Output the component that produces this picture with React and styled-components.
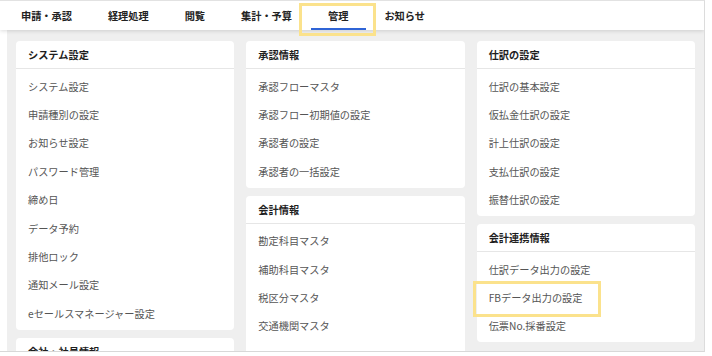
import styled, { createGlobalStyle } from "styled-components";

const GlobalStyle = createGlobalStyle`
  * {
    box-sizing: border-box;
  }

  body {
    margin: 0;
    background: #ffffff;
    font-family: "Noto Sans CJK JP", "Noto Sans", sans-serif;
    color: #222;
  }
`;

const Frame = styled.div`
  width: 705px;
  height: 352px;
  border-top: 1px solid #e2e2e2;
  border-right: 1px solid #dcdcdc;
  border-bottom: 1px solid #d8d8d8;
  overflow: hidden;
  display: flex;
  flex-direction: column;
`;

const NavBar = styled.nav`
  height: 29px;
  flex-shrink: 0;
  display: flex;
  padding-left: 3px;
  background: #fff;
  box-shadow: 0 1px 4px rgba(0, 0, 0, 0.14);
  position: relative;
  z-index: 2;
`;

const Tab = styled.div`
  position: relative;
  padding: 0 18px;
  display: flex;
  align-items: center;
  font-size: 10.2px;
  font-weight: 700;
  color: #222;
  white-space: nowrap;

  ${({ $active }) =>
    $active &&
    `
    &::after {
      content: "";
      position: absolute;
      left: 1px;
      right: 0;
      bottom: 0;
      height: 2px;
      background: #2f64d6;
    }
  `}
`;

const Highlight = styled.span`
  position: absolute;
  border: 3px solid #fbe28c;
  pointer-events: none;
`;

const Content = styled.main`
  flex: 1;
  margin-left: 7px;
  padding: 11px 9px;
  background: #efefef;
  display: grid;
  grid-template-columns: repeat(3, 1fr);
  gap: 12px;
  align-items: start;
`;

const Column = styled.div`
  display: flex;
  flex-direction: column;
  gap: 8px;
`;

const Card = styled.section`
  background: #fff;
  border-radius: 4px;
  padding-bottom: ${({ $clipped }) => ($clipped ? "24px" : "2px")};
`;

const CardHeader = styled.h3`
  margin: 0;
  height: 28px;
  padding: 0 12px;
  display: flex;
  align-items: center;
  font-size: 10.2px;
  font-weight: 700;
  color: #1e1e1e;
  border-bottom: 1px solid #e6e6e6;
`;

const ItemList = styled.ul`
  list-style: none;
  margin: 0;
  padding: 3px 0 0;
`;

const Item = styled.li`
  position: relative;
  height: 28.4px;
  padding: 0 12px;
  display: flex;
  align-items: center;
  font-size: 10.2px;
  color: #555;
  white-space: nowrap;
`;

const columns = [
  [
    {
      title: "システム設定",
      items: [
        "システム設定",
        "申請種別の設定",
        "お知らせ設定",
        "パスワード管理",
        "締め日",
        "データ予約",
        "排他ロック",
        "通知メール設定",
        "eセールスマネージャー設定",
      ],
    },
    { title: "会社・社員情報", items: [], clipped: true },
  ],
  [
    {
      title: "承認情報",
      items: ["承認フローマスタ", "承認フロー初期値の設定", "承認者の設定", "承認者の一括設定"],
    },
    {
      title: "会計情報",
      items: ["勘定科目マスタ", "補助科目マスタ", "税区分マスタ", "交通機関マスタ"],
      clipped: true,
    },
  ],
  [
    {
      title: "仕訳の設定",
      items: ["仕訳の基本設定", "仮払金仕訳の設定", "計上仕訳の設定", "支払仕訳の設定", "振替仕訳の設定"],
    },
    {
      title: "会計連携情報",
      items: ["仕訳データ出力の設定", "FBデータ出力の設定", "伝票No.採番設定"],
    },
  ],
];

const tabs = ["申請・承認", "経理処理", "閲覧", "集計・予算", "管理", "お知らせ"];

export default function App() {
  return (
    <>
      <GlobalStyle />
      <Frame>
        <NavBar>
          {tabs.map((tab) => (
            <Tab key={tab} $active={tab === "管理"}>
              {tab}
              {tab === "管理" && (
                <Highlight style={{ left: -11, right: -10, top: 2, bottom: -6 }} />
              )}
            </Tab>
          ))}
        </NavBar>
        <Content>
          {columns.map((cards, i) => (
            <Column key={i}>
              {cards.map((card) => (
                <Card key={card.title} $clipped={card.clipped}>
                  <CardHeader>{card.title}</CardHeader>
                  {card.items.length > 0 && (
                    <ItemList>
                      {card.items.map((item) => (
                        <Item key={item}>
                          {item}
                          {item === "FBデータ出力の設定" && (
                            <Highlight style={{ left: -4, width: 128, top: -2, bottom: -5 }} />
                          )}
                        </Item>
                      ))}
                    </ItemList>
                  )}
                </Card>
              ))}
            </Column>
          ))}
        </Content>
      </Frame>
    </>
  );
}
